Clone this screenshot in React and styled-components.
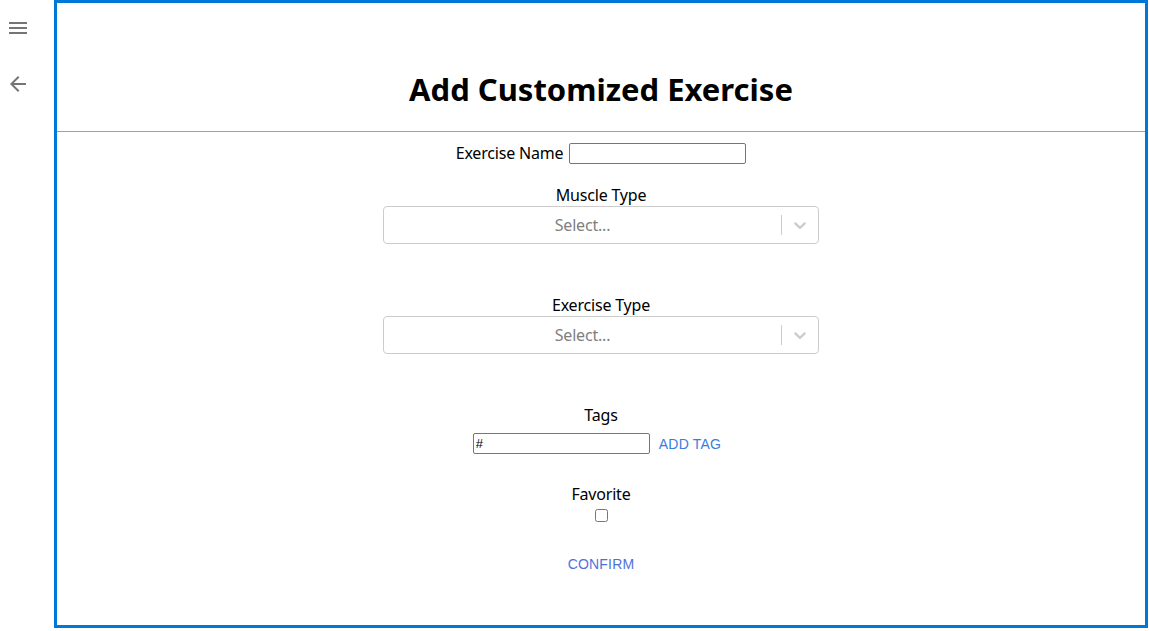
import React from "react";
import styled, { createGlobalStyle } from "styled-components";

const Global = createGlobalStyle`
  html, body { margin: 0; padding: 0; background: #fff; }
  body { font-family: "Noto Sans", "Noto Sans CJK KR", sans-serif; color: #000; }
  * { box-sizing: border-box; }
`;

const Page = styled.div`
  display: flex;
  width: 1149px;
  height: 631px;
`;

const Sidebar = styled.nav`
  width: 54px;
  flex: none;
  display: flex;
  flex-direction: column;
  gap: 32px;
  padding: 16px 0 0 6px;
`;

const IconButton = styled.button`
  width: 24px;
  height: 24px;
  padding: 0;
  border: 0;
  background: none;
  color: #757575;
  display: block;
  svg { display: block; }
`;

const Main = styled.main`
  width: 1094px;
  height: 628px;
  border: 3px solid #0078d7;
  display: flex;
  flex-direction: column;
`;

const Header = styled.header`
  height: 129px;
  flex: none;
  display: flex;
  align-items: flex-end;
  justify-content: center;
  border-bottom: 1px solid #a0a0a0;
  padding-bottom: 22px;
`;

const Title = styled.h1`
  margin: 0;
  font-size: 31px;
  line-height: 40px;
  font-weight: 700;
`;

const Form = styled.form`
  display: flex;
  flex-direction: column;
  align-items: center;
  padding-top: 11px;
  font-size: 16px;
`;

const Row = styled.div`
  display: flex;
  align-items: center;
  gap: ${(p) => p.$gap ?? 6}px;
  height: 21px;
  margin-top: ${(p) => p.$top || 0}px;
`;

const Label = styled.label`
  line-height: 21px;
  letter-spacing: -0.2px;
`;

const Field = styled.div`
  display: flex;
  flex-direction: column;
  align-items: center;
  margin-top: ${(p) => p.$top}px;
`;

const TextInput = styled.input`
  width: 177px;
  height: 21px;
  border: 1px solid #767676;
  border-radius: 2px;
  padding: 1px 2px;
  font: 13px "Liberation Sans", Arial, sans-serif;
  color: #000;
  outline: none;
`;

const SelectBox = styled.div`
  width: 436px;
  height: 38px;
  border: 1px solid #cccccc;
  border-radius: 4px;
  display: flex;
  align-items: center;
  background: #fff;
`;

const Placeholder = styled.div`
  flex: 1;
  text-align: center;
  color: #808080;
  letter-spacing: -0.2px;
`;

const Indicators = styled.div`
  display: flex;
  align-items: center;
  height: 100%;
`;

const Separator = styled.span`
  width: 1px;
  height: 20px;
  background: #cccccc;
`;

const Chevron = styled.span`
  width: 36px;
  display: flex;
  justify-content: center;
  color: #cccccc;
`;

const TextButton = styled.button`
  border: 0;
  background: none;
  padding: 0 8px;
  font: 14px "Liberation Sans", Arial, sans-serif;
  line-height: 16px;
  text-transform: uppercase;
  color: ${(p) => p.$color};
  letter-spacing: 0.2px;
  cursor: pointer;
`;

const Checkbox = styled.input`
  width: 13px;
  height: 13px;
  margin: 4px 0 0;
`;

const MenuIcon = () => (
  <svg width="24" height="24" viewBox="0 0 24 24" fill="currentColor">
    <path d="M3 18h18v-2H3v2zm0-5h18v-2H3v2zm0-7v2h18V6H3z" />
  </svg>
);

const BackIcon = () => (
  <svg width="24" height="24" viewBox="0 0 24 24" fill="currentColor">
    <path d="M20 11H7.83l5.59-5.59L12 4l-8 8 8 8 1.41-1.41L7.83 13H20v-2z" />
  </svg>
);

const ChevronIcon = () => (
  <svg width="20" height="20" viewBox="0 0 20 20" fill="currentColor">
    <path d="M4.516 7.548c0.436-0.446 1.043-0.481 1.576 0l3.908 3.747 3.908-3.747c0.533-0.481 1.141-0.446 1.574 0 0.436 0.445 0.408 1.197 0 1.615-0.406 0.418-4.695 4.502-4.695 4.502-0.217 0.223-0.502 0.335-0.787 0.335s-0.57-0.112-0.789-0.335c0 0-4.287-4.084-4.695-4.502s-0.436-1.17 0-1.615z" />
  </svg>
);

const Select = () => (
  <SelectBox>
    <Placeholder>Select...</Placeholder>
    <Indicators>
      <Separator />
      <Chevron>
        <ChevronIcon />
      </Chevron>
    </Indicators>
  </SelectBox>
);

export default function App() {
  return (
    <Page>
      <Global />
      <Sidebar>
        <IconButton aria-label="menu"><MenuIcon /></IconButton>
        <IconButton aria-label="back"><BackIcon /></IconButton>
      </Sidebar>
      <Main>
        <Header>
          <Title>Add Customized Exercise</Title>
        </Header>
        <Form onSubmit={(e) => e.preventDefault()}>
          <Row>
            <Label>Exercise Name</Label>
            <TextInput type="text" />
          </Row>
          <Field $top={21}>
            <Label>Muscle Type</Label>
            <Select />
          </Field>
          <Field $top={51}>
            <Label>Exercise Type</Label>
            <Select />
          </Field>
          <Field $top={51}>
            <Label>Tags</Label>
            <Row $gap={1} $top={7}>
              <TextInput type="text" defaultValue="#" />
              <TextButton type="button" $color="#3b7ddd">Add Tag</TextButton>
            </Row>
          </Field>
          <Field $top={30}>
            <Label>Favorite</Label>
            <Checkbox type="checkbox" />
          </Field>
          <Field $top={34}>
            <TextButton type="submit" $color="#4f72d8">Confirm</TextButton>
          </Field>
        </Form>
      </Main>
    </Page>
  );
}
